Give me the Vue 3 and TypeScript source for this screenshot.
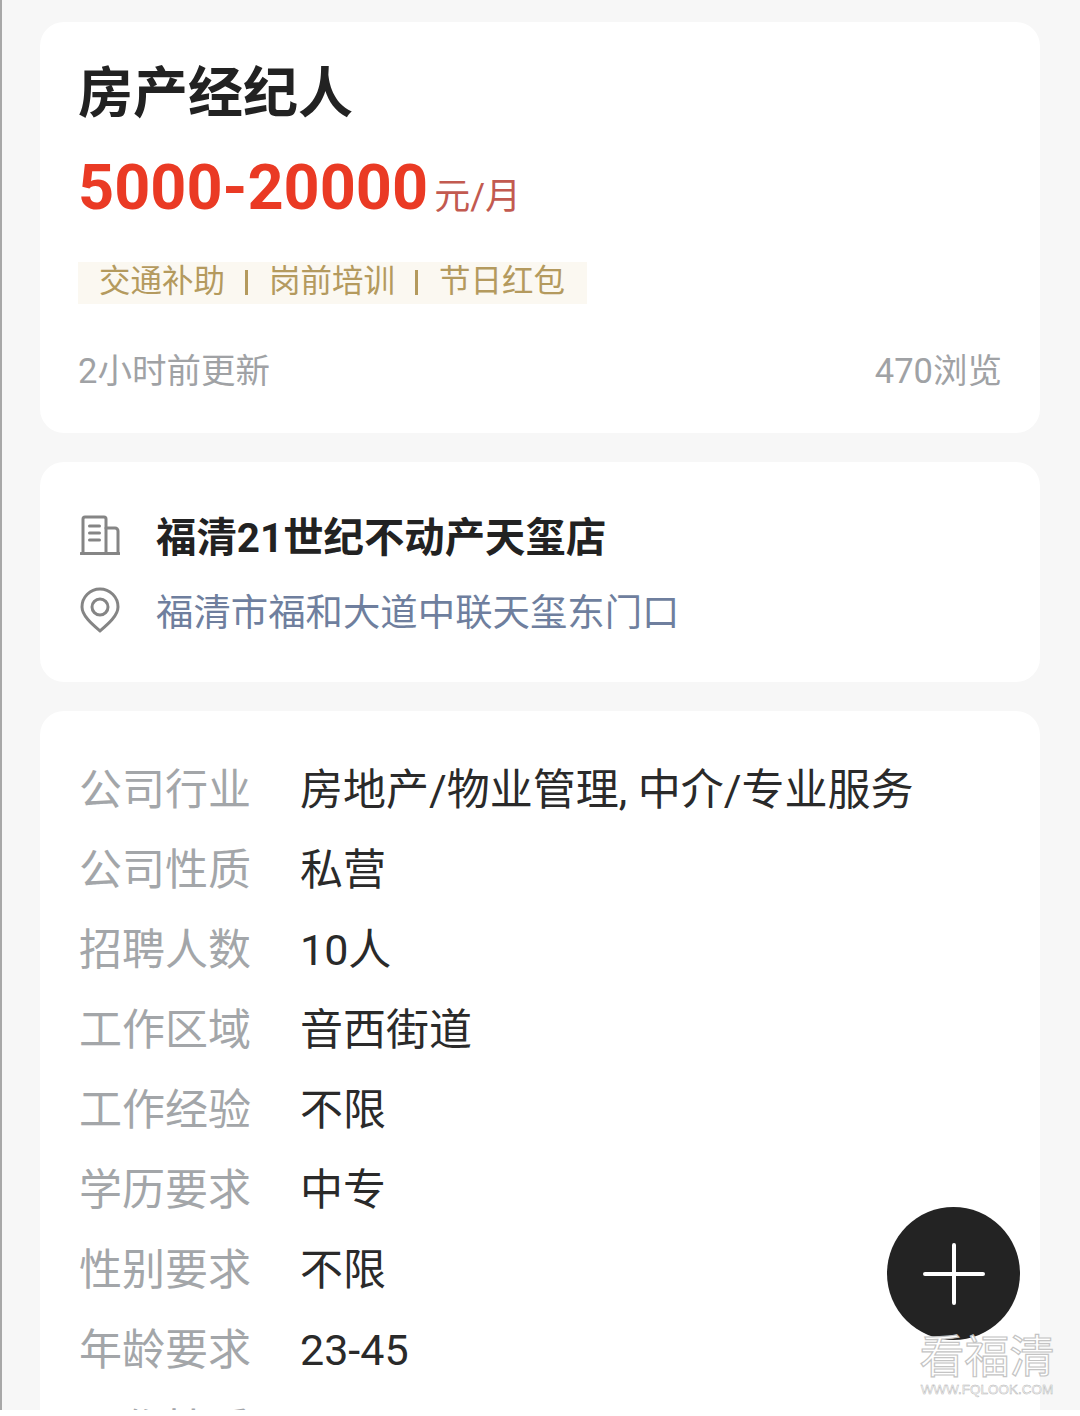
<script setup lang="ts">
const rows: { label: string; value: string }[] = [
  { label: '公司行业', value: '房地产/物业管理, 中介/专业服务' },
  { label: '公司性质', value: '私营' },
  { label: '招聘人数', value: '10人' },
  { label: '工作区域', value: '音西街道' },
  { label: '工作经验', value: '不限' },
  { label: '学历要求', value: '中专' },
  { label: '性别要求', value: '不限' },
  { label: '年龄要求', value: '23-45' },
  { label: '工作性质', value: '' },
]
</script>

<template>
  <div class="page">
    <div class="viewport">
      <section class="card head">
        <h1 class="title">房产经纪人</h1>
        <div class="price"><span class="amount">5000-20000</span><span class="unit">元/月</span></div>
        <div class="tags">
          <span>交通补助</span><i></i><span>岗前培训</span><i></i><span>节日红包</span>
        </div>
        <div class="meta"><span>2小时前更新</span><span>470浏览</span></div>
      </section>

      <section class="card company">
        <div class="line">
          <svg class="icon" viewBox="0 0 40 40" fill="none" stroke="#858585" stroke-width="3" stroke-linejoin="round" stroke-linecap="round">
            <path d="M1 38.500h38" />
            <path d="M3 38V4a2 2 0 0 1 2-2h19a2 2 0 0 1 2 2v34" />
            <path d="M26 13h9a3 3 0 0 1 3 3v22" />
            <path d="M9.500 11h10M9.500 18h10M9.500 25h10" />
          </svg>
          <strong>福清21世纪不动产天玺店</strong>
        </div>
        <div class="line">
          <svg class="icon" viewBox="0 0 40 46" fill="none" stroke="#858585" stroke-width="3">
            <path d="M20 44C13 38 2 29 2 20a18 18 0 0 1 36 0c0 9-11 18-18 24z" stroke-linejoin="round" />
            <circle cx="20" cy="20" r="8" />
          </svg>
          <span class="addr">福清市福和大道中联天玺东门口</span>
        </div>
      </section>

      <section class="card details">
        <div v-for="row in rows" :key="row.label" class="row">
          <span class="label">{{ row.label }}</span>
          <span class="value">{{ row.value }}</span>
        </div>
      </section>
    </div>

    <div class="fab">
      <svg viewBox="0 0 62 62" width="62" height="62" stroke="#fff" stroke-width="4" stroke-linecap="round">
        <path d="M2 31h58M31 2v58" />
      </svg>
    </div>
    <div class="mark">
      <div class="mark-cn">看福清</div>
      <div class="mark-en">WWW.FQLOOK.COM</div>
    </div>
  </div>
</template>

<style>
html, body { margin: 0; background: #fff; }
</style>

<style scoped>
.page {
  position: relative;
  width: 1080px;
  height: 1416px;
  overflow: hidden;
  background: #fff;
  font-family: Roboto, "Noto Sans CJK SC", sans-serif;
}
.viewport {
  box-sizing: border-box;
  height: 1410px;
  overflow: hidden;
  background: #f7f7f7;
  border-left: 2px solid #a8a8a8;
  padding: 22px 40px 0 38px;
  display: flex;
  flex-direction: column;
  gap: 29px;
}
.card {
  background: #fff;
  border-radius: 24px;
  flex: none;
}
.head {
  height: 411px;
  box-sizing: border-box;
  padding: 39px 38px 0;
}
.title {
  margin: 0;
  font-size: 55px;
  line-height: 64px;
  font-weight: 700;
  color: #222;
}
.price {
  display: flex;
  align-items: baseline;
  margin-top: 26px;
  height: 74px;
}
.amount {
  font-size: 63px;
  line-height: 74px;
  font-weight: 700;
  color: #ea3a24;
}
.unit {
  font-size: 36px;
  margin-left: 6px;
  color: #c25a50;
}
.tags {
  display: inline-flex;
  align-items: flex-start;
  margin-top: 37px;
  height: 42px;
  line-height: 40px;
  padding: 0 22px 0 21px;
  background: #fbf8f1;
  color: #b49a5e;
  font-size: 31.500px;
}
.tags i {
  width: 3px;
  height: 25px;
  margin: 8px 21px 0 20px;
  background: #b49a5e;
}
.meta {
  display: flex;
  justify-content: space-between;
  align-items: center;
  margin-top: 42px;
  height: 44px;
  font-size: 34.500px;
  color: #a0a2a5;
}
.company {
  height: 220px;
  box-sizing: border-box;
  padding: 35px 40px 0;
}
.line {
  display: flex;
  align-items: center;
  height: 75px;
}
.icon {
  width: 40px;
  height: 46px;
  flex: none;
  margin-right: 36px;
}
.line strong {
  font-size: 40.400px;
  font-weight: 700;
  color: #222;
}
.addr {
  font-size: 37.400px;
  color: #6f7f9e;
}
.details {
  padding: 39px 40px 0 39px;
}
.row {
  display: flex;
  align-items: center;
  height: 80px;
  font-size: 43px;
  line-height: 60px;
}
.label {
  width: 221px;
  flex: none;
  color: #a3a6a9;
}
.value {
  color: #2a2a2a;
}
.fab {
  position: absolute;
  left: 887px;
  top: 1207px;
  width: 133px;
  height: 133px;
  border-radius: 50%;
  background: #232323;
  display: flex;
  align-items: center;
  justify-content: center;
}
.mark {
  position: absolute;
  left: 919px;
  top: 1333px;
  width: 136px;
  text-align: center;
  color: #fff;
  font-family: "Liberation Sans", "Noto Sans CJK SC", sans-serif;
}
.mark-cn {
  font-size: 45px;
  line-height: 50px;
  color: #fff;
  -webkit-text-stroke: 1.200px #c4c4c4;
}
.mark-en {
  font-size: 13.500px;
  line-height: 14px;
  color: #fff;
  -webkit-text-stroke: 0.500px #b5b5b5;
  white-space: nowrap;
}
</style>
